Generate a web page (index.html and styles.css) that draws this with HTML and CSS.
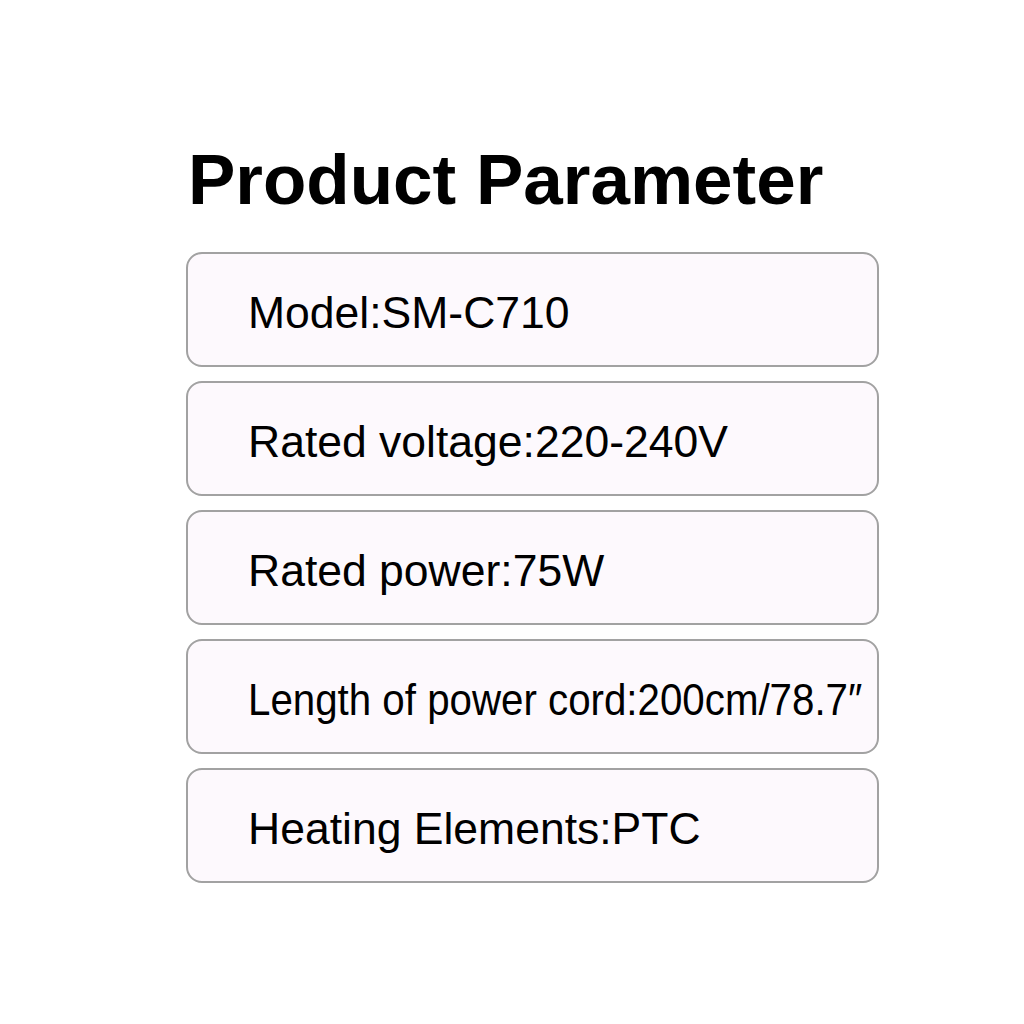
FILE: index.html
```html
<!DOCTYPE html>
<html>
<head>
<meta charset="utf-8">
<link rel="stylesheet" href="styles.css">
</head>
<body>
<main class="page">
  <h1 class="title">Product Parameter</h1>
  <ul class="params">
    <li class="param"><span class="label">Model:SM-C710</span></li>
    <li class="param"><span class="label">Rated voltage:220-240V</span></li>
    <li class="param"><span class="label">Rated power:75W</span></li>
    <li class="param"><span class="label narrow">Length of power cord:200cm/78.7″</span></li>
    <li class="param"><span class="label">Heating Elements:PTC</span></li>
  </ul>
</main>
</body>
</html>
```
FILE: styles.css
```css
html, body {
  margin: 0;
  padding: 0;
  background: #ffffff;
}
.page {
  width: 1024px;
  height: 1024px;
  box-sizing: border-box;
  padding: 141px 0 0 186px;
  font-family: "Liberation Sans", Arial, sans-serif;
  color: #000;
}
.title {
  margin: 0 0 33px 2px;
  font-size: 71px;
  font-weight: bold;
  line-height: 78px;
}
.params {
  list-style: none;
  margin: 0;
  padding: 0;
  width: 693px;
  display: flex;
  flex-direction: column;
  gap: 14px;
}
.param {
  box-sizing: border-box;
  height: 115px;
  border: 2px solid #a2a2a2;
  border-radius: 16px;
  background: #fdf9fd;
  display: flex;
  align-items: center;
  padding: 8px 0 0 60px;
}
.label {
  font-size: 44.5px;
  line-height: 1;
  white-space: nowrap;
}
.narrow {
  display: inline-block;
  transform: scaleX(0.905);
  transform-origin: left center;
}
```
